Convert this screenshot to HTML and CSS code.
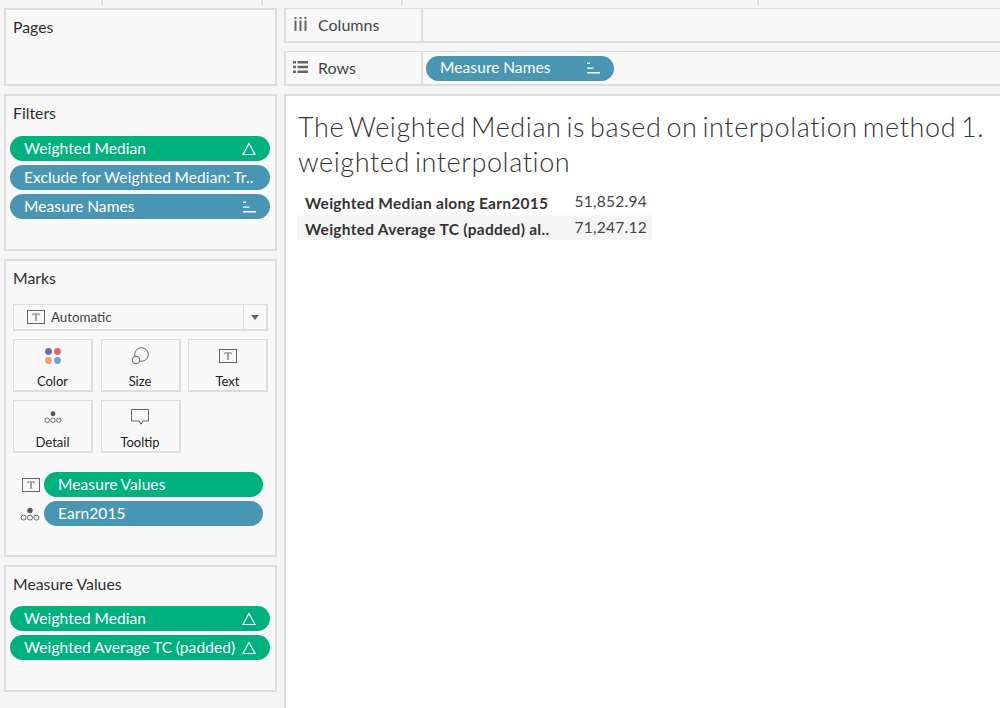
FILE: index.html
```html
<!DOCTYPE html>
<html lang="en">
<head>
<meta charset="utf-8">
<title>Weighted Median</title>
<link rel="stylesheet" href="styles.css">
</head>
<body>
<svg class="defs" width="0" height="0" aria-hidden="true">
  <symbol id="delta" viewBox="0 0 14 14"><path d="M7 1.500 L13 12.500 H1 Z" fill="none" stroke="currentColor" stroke-width="1.2"/></symbol>
  <symbol id="sort" viewBox="0 0 14 14"><path d="M1 1.500h3v1.400H1zM1 6.400h6.500v1.400H1zM1 11h13v1.400H1z" fill="currentColor"/></symbol>
  <symbol id="tbox" viewBox="0 0 18 14"><rect x=".5" y=".5" width="17" height="13" fill="none" stroke="#666"/><path d="M5.500 3.500h7v2h-.6l-.4-1.200H9.600v5.600l1 .3v.4H7.400v-.4l1-.3V4.300H6.500l-.4 1.200h-.6z" fill="#666"/></symbol>
  <symbol id="dots" viewBox="0 0 20 14"><circle cx="10" cy="3.400" r="2.700" fill="#555"/><g fill="none" stroke="#666"><circle cx="3.600" cy="10.600" r="2.500"/><circle cx="10" cy="10.600" r="2.500"/><circle cx="16.400" cy="10.600" r="2.500"/></g></symbol>
</svg>
<div class="topbar">
  <span class="tab tab-a"></span><span class="tab tab-b"></span><span class="tab tab-c"></span><span class="tab tab-d"></span>
</div>
<div class="layout">
  <aside class="side">
    <section class="panel pages"><h2>Pages</h2></section>
    <section class="panel filters">
      <h2>Filters</h2>
      <div class="pills">
        <div class="pill green"><span>Weighted Median</span><svg class="pi"><use href="#delta"/></svg></div>
        <div class="pill blue"><span>Exclude for Weighted Median: Tr..</span></div>
        <div class="pill blue"><span>Measure Names</span><svg class="pi"><use href="#sort"/></svg></div>
      </div>
    </section>
    <section class="panel marks">
      <h2>Marks</h2>
      <div class="dropdown">
        <div class="dd-label"><svg class="t-icon"><use href="#tbox"/></svg>Automatic</div>
        <div class="dd-btn"><span class="caret"></span></div>
      </div>
      <div class="cards">
        <div class="card">
          <svg class="card-icon" viewBox="0 0 18 18"><circle cx="4.500" cy="4.500" r="3.400" fill="#7b6a9c"/><circle cx="13.500" cy="4.500" r="3.400" fill="#e8606f"/><circle cx="4.500" cy="13.500" r="3.400" fill="#f0a070"/><circle cx="13.500" cy="13.500" r="3.400" fill="#6fa3d0"/></svg>
          <span>Color</span>
        </div>
        <div class="card">
          <svg class="card-icon" viewBox="0 0 18 18"><circle cx="10.500" cy="7.500" r="6.800" fill="none" stroke="#666"/><circle cx="5" cy="13" r="3.800" fill="#f8f8f8" stroke="#666"/></svg>
          <span>Size</span>
        </div>
        <div class="card">
          <svg class="card-icon"><use href="#tbox"/></svg>
          <span>Text</span>
        </div>
        <div class="card">
          <svg class="card-icon"><use href="#dots"/></svg>
          <span>Detail</span>
        </div>
        <div class="card">
          <svg class="card-icon" viewBox="0 0 18 18"><path d="M.5 1.500h17v11.500h-5.500l-2 3.200-1.600-3.200H.5z" fill="none" stroke="#666"/></svg>
          <span>Tooltip</span>
        </div>
      </div>
      <div class="mark-rows">
        <div class="mark-row"><svg class="t-icon"><use href="#tbox"/></svg><div class="pill green"><span>Measure Values</span></div></div>
        <div class="mark-row"><svg class="d-icon"><use href="#dots"/></svg><div class="pill blue"><span>Earn2015</span></div></div>
      </div>
    </section>
    <section class="panel mvals">
      <h2>Measure Values</h2>
      <div class="pills">
        <div class="pill green"><span>Weighted Median</span><svg class="pi"><use href="#delta"/></svg></div>
        <div class="pill green"><span>Weighted Average TC (padded)</span><svg class="pi"><use href="#delta"/></svg></div>
      </div>
    </section>
  </aside>
  <main class="main">
    <div class="shelf">
      <div class="shelf-label">
        <svg class="shelf-icon" viewBox="0 0 15 14"><path d="M1.500 0h2v2h-2zM6.500 0h2v2h-2zM11.500 0h2v2h-2zM1.500 3.500h2V14h-2zM6.500 3.500h2V14h-2zM11.500 3.500h2V14h-2z" fill="#666"/></svg>
        Columns
      </div>
      <div class="shelf-body"></div>
    </div>
    <div class="shelf">
      <div class="shelf-label">
        <svg class="shelf-icon" viewBox="0 0 15 14"><path d="M0 1h3v2.400H0zM4.500 1H15v2.400H4.500zM0 5.800h3v2.400H0zM4.500 5.800H15v2.400H4.500zM0 10.600h3V13H0zM4.500 10.600H15V13H4.500z" fill="#666"/></svg>
        Rows
      </div>
      <div class="shelf-body">
        <div class="pill blue shelf-pill"><span>Measure Names</span><svg class="pi"><use href="#sort"/></svg></div>
      </div>
    </div>
    <section class="view">
      <h1>The Weighted Median is based on interpolation method 1.<br>weighted interpolation</h1>
      <div class="table">
        <div class="row"><div class="name">Weighted Median along Earn2015</div><div class="val">51,852.94</div></div>
        <div class="row alt"><div class="name">Weighted Average TC (padded) al..</div><div class="val">71,247.12</div></div>
      </div>
    </section>
  </main>
</div>
</body>
</html>
```
FILE: styles.css
```css
* { box-sizing: border-box; }
html, body { margin: 0; height: 100%; overflow: hidden; }
body {
  background: #f5f5f5;
  font-family: "Lato", "Open Sans", sans-serif;
  color: #333;
  display: flex;
  flex-direction: column;
  height: 708px;
}
.defs { position: absolute; }
.topbar { height: 8px; display: flex; flex: none; }
.tab { height: 5px; border-right: 2px solid #dcdcdc; }
.tab-a { width: 103px; }
.tab-b { width: 160px; }
.tab-c { width: 140px; }
.tab-d { width: 356px; }
.layout { flex: 1; display: flex; min-height: 0; padding-left: 4px; gap: 7px; }
.side { width: 273px; flex: none; display: flex; flex-direction: column; gap: 8px; padding-bottom: 16px; }
.panel {
  background: #f8f8f8;
  border: 2px solid #dddddd;
  padding: 8px 7px 0 7px;
}
.panel h2 { margin: 0; font-size: 15.800px; line-height: 18px; font-weight: 400; color: #2e2e2e; }
.pages { height: 78px; }
.filters { height: 157px; }
.marks { height: 298px; }
.mvals { flex: 1; }
.pills { display: flex; flex-direction: column; gap: 4px; margin: 14px -2px 0 -3px; }
.mvals .pills { margin-top: 13px; }
.pill {
  height: 25px;
  border-radius: 13px;
  display: flex;
  align-items: center;
  justify-content: space-between;
  padding: 0 14px 0 14px;
  color: #fff;
  font-size: 15.500px;
  letter-spacing: .1px;
  word-spacing: -.5px;
  white-space: nowrap;
}
.pill span { padding-bottom: 2px; }
.green { background: #00b180; }
.blue { background: #4996b2; }
.pi { width: 14px; height: 14px; flex: none; color: #fff; }
.dropdown {
  margin-top: 17px;
  height: 27px;
  width: 255px;
  display: flex;
  background: #f8f8f8;
  border: 2px solid #dddddd;
  border-width: 1px 2px 2px 1px;
}
.dd-label { flex: 1; display: flex; align-items: center; gap: 6px; padding-left: 13px; font-size: 13.300px; color: #444; }
.dd-btn { width: 23px; border-left: 1px solid #dddddd; display: flex; align-items: center; justify-content: center; }
.caret { width: 0; height: 0; border: 4.500px solid transparent; border-top: 5px solid #666; border-bottom: 0; }
.t-icon { width: 18px; height: 14px; flex: none; }
.cards { display: grid; grid-template-columns: 80px 80px 80px; column-gap: 7.500px; row-gap: 8px; margin-top: 8px; }
.card {
  height: 53px;
  border: 2px solid #dddddd;
  border-width: 1px 2px 2px 1px;
  background: #f8f8f8;
  display: flex;
  flex-direction: column;
  align-items: center;
  font-size: 13px;
  color: #222;
  padding-top: 7px;
  gap: 8px;
}
.card-icon { width: 18px; height: 18px; flex: none; }
.card span { line-height: 16px; }
.mark-rows { display: flex; flex-direction: column; gap: 4px; margin-top: 19px; }
.mark-row { display: flex; align-items: center; justify-content: space-between; padding-left: 7px; width: 250px; }
.mark-row .pill { width: 219px; }
.mark-row .t-icon { margin-left: 2px; }
.d-icon { width: 20px; height: 14px; flex: none; }
.main { flex: 1; display: flex; flex-direction: column; gap: 8px; min-width: 0; }
.shelf { height: 35px; flex: none; display: flex; background: #f8f8f8; border: 2px solid #dddddd; border-width: 1px 0 2px 2px; }
.shelf-label { width: 137px; flex: none; border-right: 2px solid #dddddd; display: flex; align-items: center; font-size: 16px; color: #444; padding: 0 0 2px 7px; gap: 10px; }
.shelf-icon { width: 15px; height: 14px; flex: none; }
.shelf-body { flex: 1; display: flex; align-items: center; padding-left: 3px; }
.shelf-pill { width: 188px; }
.view { flex: 1; background: #fff; border-top: 2px solid #dddddd; border-left: 2px solid #dddddd; padding: 13px 0 0 12px; }
.view h1 { margin: 0; font-size: 27px; line-height: 35px; font-weight: 300; color: #333; letter-spacing: .6px; word-spacing: -3px; white-space: nowrap; }
.table { margin: 10px 0 0 -1px; width: 355px; }
.row { height: 26px; display: flex; align-items: center; font-size: 15.500px; letter-spacing: .27px; padding: 0 5px 0 8px; justify-content: space-between; }
.row.alt { height: 25px; background: #f5f5f5; }
.name { font-weight: 700; color: #333; padding-top: 2px; }
.val { color: #444; padding-bottom: 2px; }
```
